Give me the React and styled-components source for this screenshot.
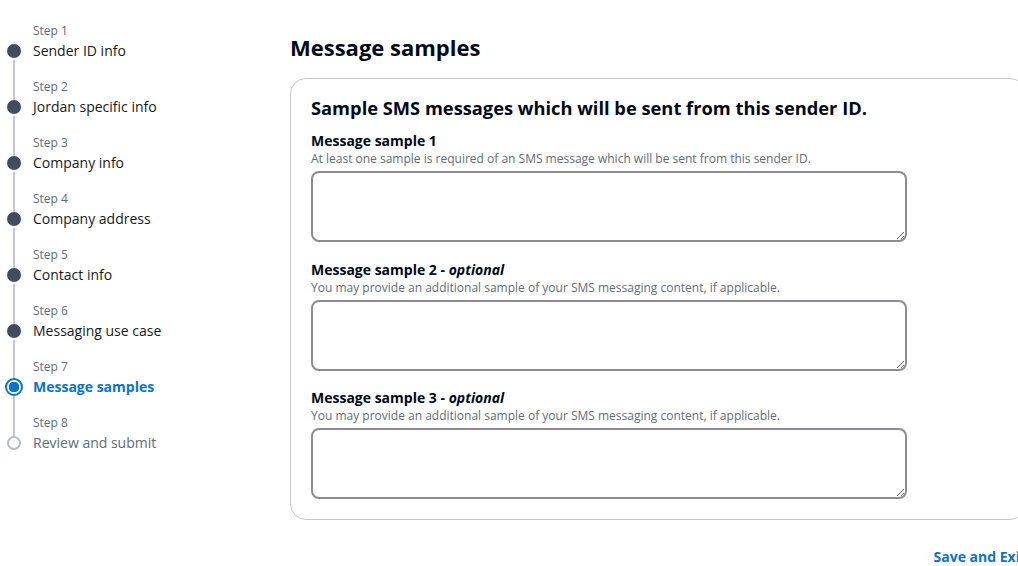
import React from "react";
import styled, { createGlobalStyle, css } from "styled-components";

const Global = createGlobalStyle`
  html, body { margin: 0; padding: 0; background: #ffffff; overflow: hidden; }
  body { font-family: "Open Sans", "Noto Sans", sans-serif; color: #16191f; }
  * { box-sizing: border-box; }
`;

const Page = styled.div`
  display: flex;
  align-items: flex-start;
  width: 1100px;
`;

const Sidebar = styled.nav`
  width: 290px;
  flex-shrink: 0;
  padding-top: 23px;
  display: flex;
  flex-direction: column;
`;

const StepItem = styled.div`
  position: relative;
  display: grid;
  grid-template-columns: 33px auto;
  grid-template-rows: 16px 20px;
  row-gap: 2px;
  height: 56px;
  ${(p) =>
    !p.$last &&
    css`
      &::after {
        content: "";
        position: absolute;
        left: 13px;
        top: 37px;
        width: 2px;
        height: 42px;
        background: #c6c6cd;
      }
    `}
`;

const StepNum = styled.div`
  grid-column: 2;
  grid-row: 1;
  font-size: 12px;
  line-height: 16px;
  color: #5f6b7a;
`;

const StepTitle = styled.div`
  grid-column: 2;
  grid-row: 2;
  font-size: 14px;
  line-height: 20px;
  color: ${(p) => (p.$active ? "#0972d3" : p.$future ? "#5f6b7a" : "#16191f")};
  font-weight: ${(p) => (p.$active ? 700 : 400)};
`;

const Dot = styled.div`
  grid-column: 1;
  grid-row: 2;
  align-self: center;
  margin-left: 7px;
  width: 14px;
  height: 14px;
  border-radius: 50%;
  ${(p) =>
    p.$state === "done" &&
    css`
      background: #414d5c;
    `}
  ${(p) =>
    p.$state === "active" &&
    css`
      width: 18px;
      height: 18px;
      margin-left: 5px;
      border: 2px solid #0972d3;
      background: radial-gradient(circle, #0972d3 0 5px, #fff 5.5px);
    `}
  ${(p) =>
    p.$state === "future" &&
    css`
      border: 2px solid #b6bec9;
      background: #fff;
    `}
`;

const Main = styled.main`
  width: 736px;
  flex-shrink: 0;
  padding-top: 31px;
  display: flex;
  flex-direction: column;
`;

const H1 = styled.h1`
  margin: 0 0 15px;
  font-size: 22px;
  line-height: 32px;
  font-weight: 700;
  color: #000716;
`;

const Card = styled.section`
  border: 1px solid #c6c6cd;
  border-radius: 16px;
  padding: 18px 20px 20px;
  display: flex;
  flex-direction: column;
`;

const CardTitle = styled.h2`
  margin: 0 0 12px;
  font-size: 18.3px;
  line-height: 22px;
  font-weight: 700;
  color: #000716;
`;

const Field = styled.div`
  display: flex;
  flex-direction: column;
  & + & {
    margin-top: 17.5px;
  }
`;

const Label = styled.label`
  font-size: 14px;
  line-height: 20px;
  font-weight: 700;
  color: #000716;
  em {
    font-style: italic;
  }
`;

const Desc = styled.div`
  font-size: 12px;
  line-height: 16px;
  color: #5f6b7a;
  margin-bottom: 4px;
`;

const TextArea = styled.textarea`
  width: 596px;
  height: 71px;
  border: 2px solid #8c8c94;
  border-radius: 8px;
  resize: vertical;
  font-family: inherit;
  font-size: 14px;
  padding: 4px 8px;
  outline: none;
`;

const Actions = styled.div`
  display: flex;
  justify-content: flex-end;
  margin-top: 27px;
`;

const LinkButton = styled.button`
  border: none;
  background: none;
  padding: 0;
  font-family: inherit;
  font-size: 14px;
  line-height: 20px;
  font-weight: 700;
  color: #0972d3;
  cursor: pointer;
`;

const steps = [
  "Sender ID info",
  "Jordan specific info",
  "Company info",
  "Company address",
  "Contact info",
  "Messaging use case",
  "Message samples",
  "Review and submit",
];

const fields = [
  {
    label: "Message sample 1",
    optional: false,
    desc: "At least one sample is required of an SMS message which will be sent from this sender ID.",
  },
  {
    label: "Message sample 2",
    optional: true,
    desc: "You may provide an additional sample of your SMS messaging content, if applicable.",
  },
  {
    label: "Message sample 3",
    optional: true,
    desc: "You may provide an additional sample of your SMS messaging content, if applicable.",
  },
];

export default function App() {
  const activeIdx = 6;
  return (
    <>
      <Global />
      <Page>
        <Sidebar>
          {steps.map((s, i) => {
            const state = i < activeIdx ? "done" : i === activeIdx ? "active" : "future";
            return (
              <StepItem key={s} $last={i === steps.length - 1}>
                <StepNum>Step {i + 1}</StepNum>
                <Dot $state={state} />
                <StepTitle $active={state === "active"} $future={state === "future"}>
                  {s}
                </StepTitle>
              </StepItem>
            );
          })}
        </Sidebar>
        <Main>
          <H1>Message samples</H1>
          <Card>
            <CardTitle>Sample SMS messages which will be sent from this sender ID.</CardTitle>
            {fields.map((f) => (
              <Field key={f.label}>
                <Label>
                  {f.label}
                  {f.optional && (
                    <>
                      {" - "}
                      <em>optional</em>
                    </>
                  )}
                </Label>
                <Desc>{f.desc}</Desc>
                <TextArea />
              </Field>
            ))}
          </Card>
          <Actions>
            <LinkButton>Save and Exit</LinkButton>
          </Actions>
        </Main>
      </Page>
    </>
  );
}
